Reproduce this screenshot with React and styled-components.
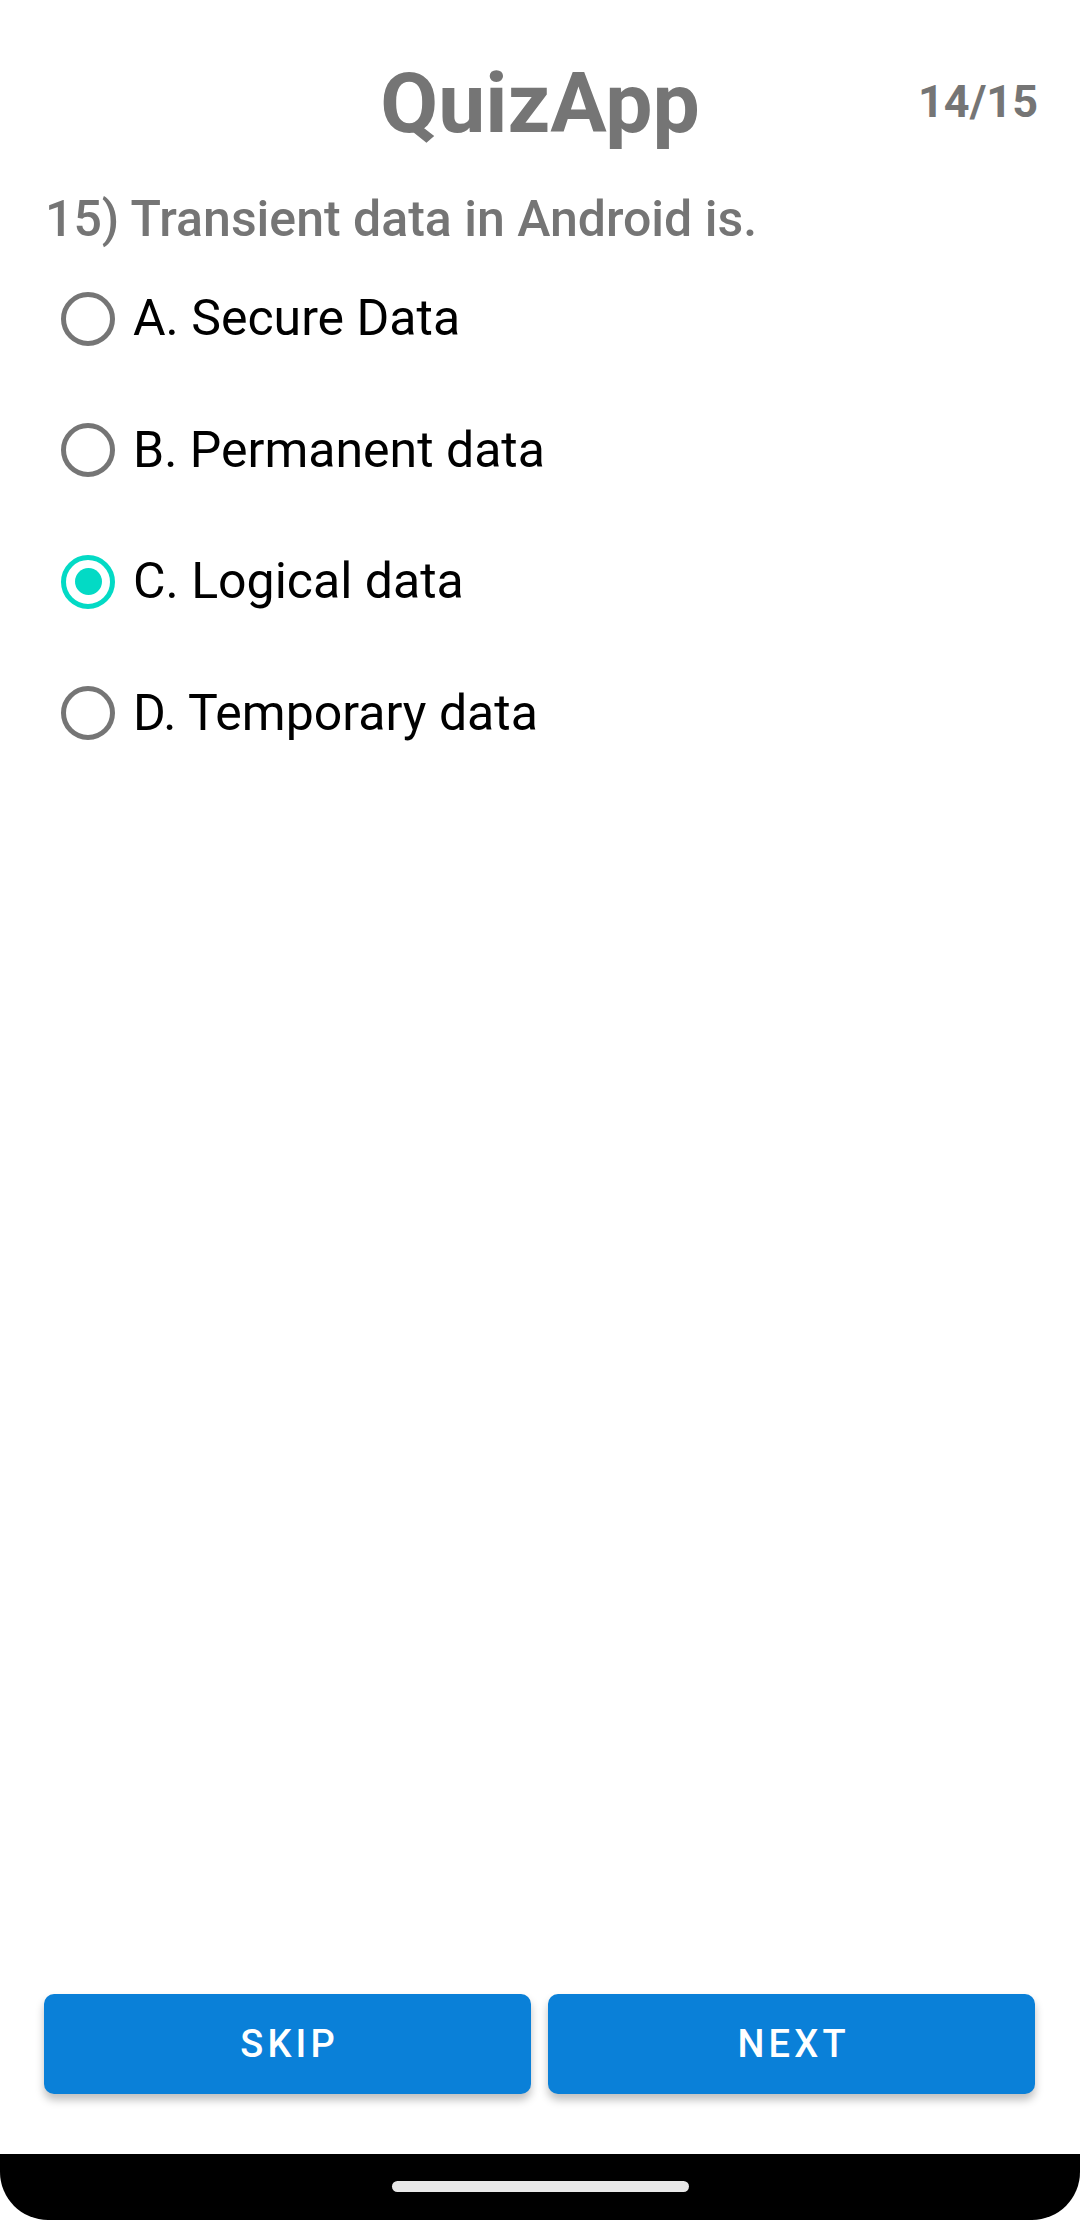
import React, { useState } from 'react'
import styled, { createGlobalStyle } from 'styled-components'

const options = [
	{ id: 'a', label: 'A. Secure Data' },
	{ id: 'b', label: 'B. Permanent data' },
	{ id: 'c', label: 'C. Logical data' },
	{ id: 'd', label: 'D. Temporary data' },
]

export default function App() {

	const [picked, setPicked] = useState('c')

	return (
		<>
			<GlobalStyle/>
			<Screen>
				<Content>
					<Header>
						<span></span>
						<Title>QuizApp</Title>
						<Counter>14/15</Counter>
					</Header>
					<Question>15) Transient data in Android is.</Question>
					<OptionList>
						{options.map(opt => (
							<OptionRow key={opt.id} onClick={() => setPicked(opt.id)}>
								<Radio checked={picked === opt.id}/>
								<OptionText>{opt.label}</OptionText>
							</OptionRow>
						))}
					</OptionList>
				</Content>
				<ButtonRow>
					<ActionButton>SKIP</ActionButton>
					<ActionButton>NEXT</ActionButton>
				</ButtonRow>
				<NavBar>
					<HomeHandle/>
				</NavBar>
			</Screen>
		</>
	)
}

const GlobalStyle = createGlobalStyle`
	body{
		margin: 0;
		background: #fff;
		font-family: Roboto, "Noto Sans", sans-serif;
	}
`
const Screen = styled.div`
	display: flex;
	flex-direction: column;
	width: 1080px;
	height: 2220px;
	background: #fff;
	overflow: hidden;
`
const Content = styled.div`
	flex: 1;
	display: flex;
	flex-direction: column;
	padding: 54px 42px 0;
`
const Header = styled.div`
	display: grid;
	grid-template-columns: 1fr auto 1fr;
	align-items: center;
`
const Title = styled.h1`
	margin: 0;
	font-size: 84px;
	line-height: 100px;
	font-weight: 700;
	color: #757575;
`
const Counter = styled.span`
	justify-self: end;
	margin-bottom: 5px;
	font-size: 45px;
	line-height: 52px;
	font-weight: 700;
	color: #757575;
`
const Question = styled.p`
	margin: 38px 0 0;
	padding-left: 3px;
	font-size: 50px;
	line-height: 55px;
	font-weight: 500;
	color: #757575;
`
const OptionList = styled.div`
	display: flex;
	flex-direction: column;
	margin-top: 6px;
`
const OptionRow = styled.label`
	display: flex;
	align-items: center;
	gap: 18px;
	height: 131.5px;
	padding-left: 19px;
	cursor: pointer;
`
const Radio = styled.span`
	box-sizing: border-box;
	display: flex;
	align-items: center;
	justify-content: center;
	width: 54px;
	height: 54px;
	border-radius: 50%;
	border: 5.5px solid ${p => p.checked ? '#03dac5' : '#757575'};

	&::after{
		content: "";
		display: ${p => p.checked ? 'block' : 'none'};
		width: 27px;
		height: 27px;
		border-radius: 50%;
		background: #03dac5;
	}
`
const OptionText = styled.span`
	font-size: 50px;
	line-height: 55px;
	color: #000;
`
const ButtonRow = styled.div`
	display: flex;
	gap: 17px;
	padding: 0 45px 60px 44px;
`
const ActionButton = styled.button`
	flex: 1;
	height: 100px;
	padding: 0 0 0 0.11em;
	border: none;
	border-radius: 10px;
	background: #0a80d8;
	color: #fff;
	font-family: Roboto, sans-serif;
	font-size: 38px;
	font-weight: 500;
	letter-spacing: 0.11em;
	box-shadow: 0 6px 8px rgba(0, 0, 0, 0.25);
	cursor: pointer;
`
const NavBar = styled.div`
	display: flex;
	justify-content: center;
	height: 66px;
	padding-top: 27px;
	box-sizing: border-box;
	background: #000;
	border-bottom-left-radius: 48px;
	border-bottom-right-radius: 48px;
`
const HomeHandle = styled.div`
	width: 297px;
	height: 11px;
	border-radius: 6px;
	background: #e8e8e8;
`
